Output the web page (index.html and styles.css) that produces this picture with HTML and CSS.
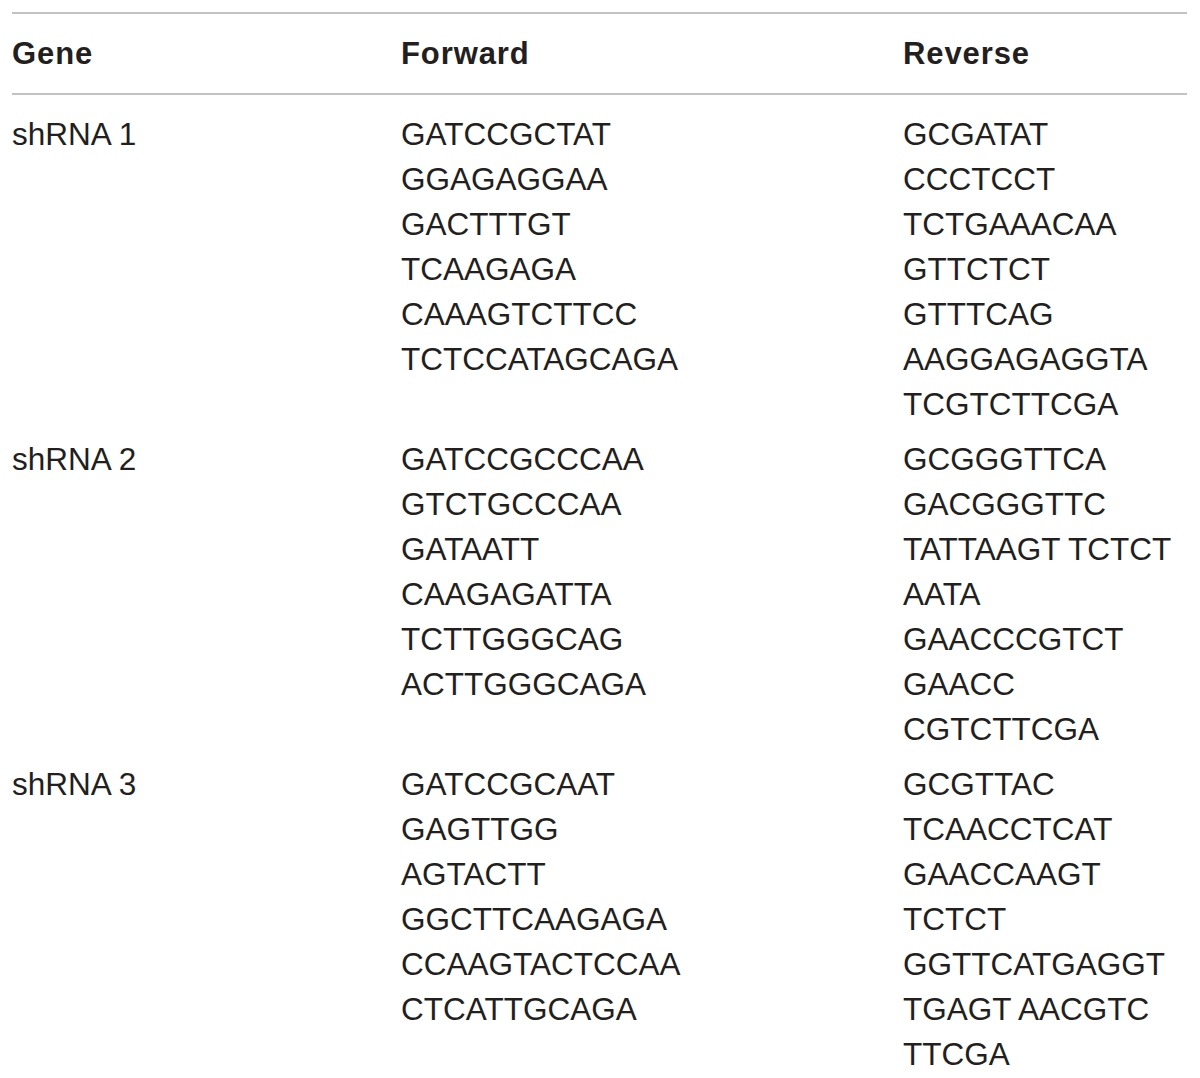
FILE: index.html
```html
<!DOCTYPE html>
<html lang="en">
<head>
<meta charset="utf-8">
<title>shRNA sequences</title>
<link rel="stylesheet" href="styles.css">
</head>
<body>
<table class="seq-table">
  <colgroup>
    <col class="col-gene">
    <col class="col-fwd">
    <col class="col-rev">
  </colgroup>
  <thead>
    <tr>
      <th>Gene</th>
      <th>Forward</th>
      <th>Reverse</th>
    </tr>
  </thead>
  <tbody>
    <tr>
      <td>shRNA 1</td>
      <td><div>GATCCGCTAT</div><div>GGAGAGGAA</div><div>GACTTTGT</div><div>TCAAGAGA</div><div>CAAAGTCTTCC</div><div>TCTCCATAGCAGA</div></td>
      <td><div>GCGATAT</div><div>CCCTCCT</div><div>TCTGAAACAA</div><div>GTTCTCT</div><div>GTTTCAG</div><div>AAGGAGAGGTA</div><div>TCGTCTTCGA</div></td>
    </tr>
    <tr>
      <td>shRNA 2</td>
      <td><div>GATCCGCCCAA</div><div>GTCTGCCCAA</div><div>GATAATT</div><div>CAAGAGATTA</div><div>TCTTGGGCAG</div><div>ACTTGGGCAGA</div></td>
      <td><div>GCGGGTTCA</div><div>GACGGGTTC</div><div>TATTAAGT TCTCT</div><div>AATA</div><div>GAACCCGTCT</div><div>GAACC</div><div>CGTCTTCGA</div></td>
    </tr>
    <tr>
      <td>shRNA 3</td>
      <td><div>GATCCGCAAT</div><div>GAGTTGG</div><div>AGTACTT</div><div>GGCTTCAAGAGA</div><div>CCAAGTACTCCAA</div><div>CTCATTGCAGA</div></td>
      <td><div>GCGTTAC</div><div>TCAACCTCAT</div><div>GAACCAAGT</div><div>TCTCT</div><div>GGTTCATGAGGT</div><div>TGAGT AACGTC</div><div>TTCGA</div></td>
    </tr>
  </tbody>
</table>
</body>
</html>
```

FILE: styles.css
```css
html, body {
  margin: 0;
  padding: 0;
  background: #ffffff;
}

body {
  font-family: "Liberation Sans", Arial, Helvetica, sans-serif;
  color: #231f20;
}

.seq-table {
  margin: 12px 0 0 12px;
  width: 1175px;
  border-collapse: collapse;
  table-layout: fixed;
  border-top: 2px solid #c2c2c2;
}

.col-gene { width: 389px; }
.col-fwd { width: 502px; }
.col-rev { width: 284px; }

.seq-table th {
  text-align: left;
  font-weight: bold;
  font-size: 31px;
  letter-spacing: 0.9px;
  line-height: 45px;
  padding: 17px 0 17px 0;
  border-bottom: 2px solid #c2c2c2;
  vertical-align: top;
}

.seq-table td {
  font-size: 31.5px;
  line-height: 45px;
  padding: 5px 0 5px 0;
  vertical-align: top;
  white-space: nowrap;
}

.seq-table tbody tr:first-child td {
  padding-top: 17px;
}
```
